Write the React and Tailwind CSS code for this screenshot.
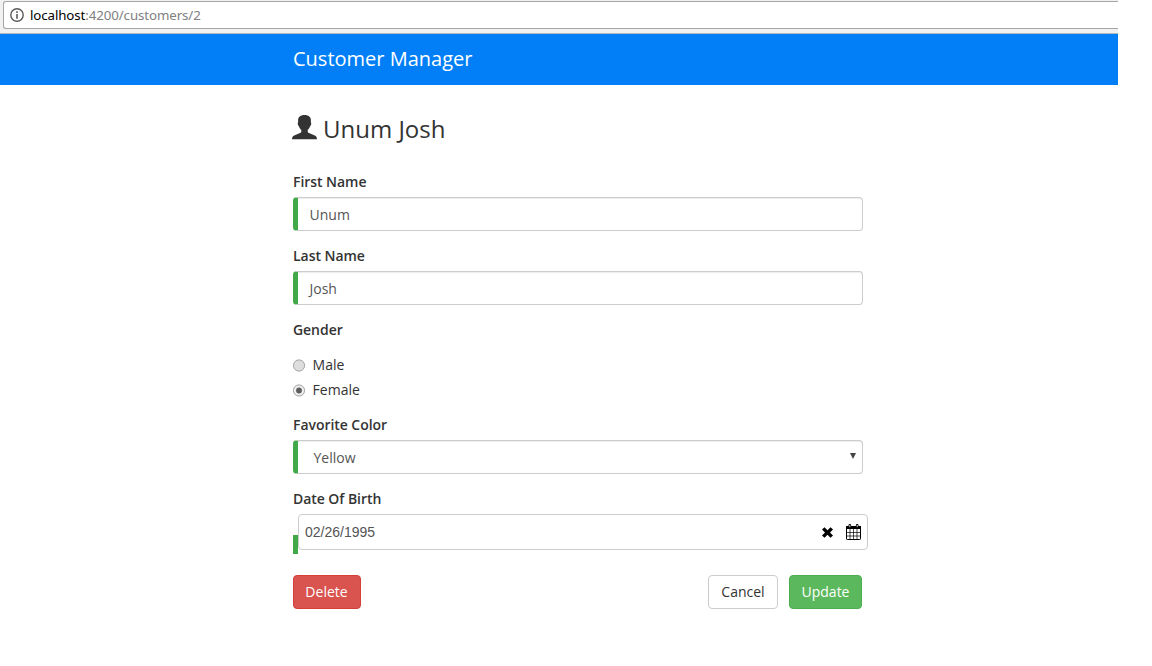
import React from "react";

const label = "h-5 mb-[5px] text-sm leading-5 font-semibold tracking-[-0.05px] text-[#333333] whitespace-nowrap";
const control =
  "flex h-[34px] w-[570px] items-center rounded-[4px] border border-[#cccccc] border-l-[5px] border-l-[#42a948] bg-white pt-px text-sm text-[#555555] shadow-[inset_0_1px_1px_rgba(0,0,0,0.075)]";

function Field({ title, children }) {
  return (
    <div className="mb-[15px]">
      <div className={label}>{title}</div>
      {children}
    </div>
  );
}

function Radio({ name, checked }) {
  return (
    <label className="flex h-5 items-center text-sm leading-5 text-[#333333]">
      <svg width="13" height="13" viewBox="0 0 13 13" className="mr-[7px]">
        <circle cx="6" cy="6.5" r="5.6" fill={checked ? "#eeeeee" : "#dddddd"} stroke="#a2a2a2" />
        {checked && <circle cx="6" cy="6.5" r="2.9" fill="#5c5c5c" />}
      </svg>
      <span className="-ml-[0.4px]">{name}</span>
    </label>
  );
}

function UserIcon() {
  return (
    <svg width="25" height="25" viewBox="0 0 25 25" fill="#333333" className="-ml-px shrink-0">
      <path d="M12.5 0C8.3 0 6.1 2.2 6.1 5.2C6.1 6.4 6.3 7.4 5.9 7.8C5.5 8.4 5.9 10.6 6.9 11.2C7.3 12.8 8.2 14 9.3 14.8V16.5C9.3 17.2 8.8 17.7 8 18.1L2.2 20.6C.8 21.3 .2 22.2 0 24.2H25C24.8 22.2 24.2 21.3 22.8 20.6L17 18.1C16.2 17.7 15.7 17.2 15.7 16.5V14.8C16.8 14 17.7 12.8 18.1 11.2C19.1 10.6 19.5 8.4 19.1 7.8C18.7 7.4 18.9 6.4 18.9 5.2C18.9 2.2 16.7 0 12.5 0Z" />
    </svg>
  );
}

function CalendarIcon() {
  return (
    <svg width="15" height="16" viewBox="0 0 15 16" fill="none" stroke="#000">
      <rect x="0.5" y="2.5" width="14" height="13" rx="0.7" />
      <path d="M0 2h15v3H0z" fill="#000" stroke="none" />
      <path d="M3.8 1.3v2.2M11.2 1.3v2.2" strokeWidth="2.6" strokeLinecap="round" />
      <path d="M3.8 1v2.2M11.2 1v2.2" stroke="#fff" strokeWidth="0.8" />
      <path d="M4 5v10M7.5 5v10M11 5v10M1 8.5h13M1 12h13" strokeWidth="0.7" />
    </svg>
  );
}

export default function App() {
  return (
    <div className="h-[666px] w-[1152px] overflow-hidden bg-white font-['Open_Sans',sans-serif]">
      <div className="flex h-[34px] w-[1118px] flex-col border-b border-[#b1b9bc] bg-[#f2f1f2] pt-px pl-[3px]">
        <div className="flex h-[28px] items-center rounded-l-[3px] border border-r-0 border-[#a6a6a6] bg-white pl-[6px] text-[14px]">
          <svg width="14" height="14" viewBox="0 0 14 14" className="mr-[6px]">
            <circle cx="7" cy="7" r="6.2" fill="none" stroke="#5a5a5a" strokeWidth="1.4" />
            <path d="M6.2 3.2h1.6v1.7H6.2zM6.2 6h1.6v4.8H6.2z" fill="#5a5a5a" />
          </svg>
          <span className="font-['Noto_Sans',sans-serif] text-[13.3px] leading-5 tracking-[-0.1px] text-[#808080]">
            <span className="text-black">localhost</span>:4200/customers/2
          </span>
        </div>
      </div>
      <header className="flex h-[51px] w-[1118px] items-center bg-[#027ff6] pb-[2px] pl-[293px] text-xl text-white">
        Customer Manager
      </header>
      <main className="ml-[293px] w-[570px]">
        <div className="flex h-[87px] pt-[30px]">
          <UserIcon />
          <h1 className="-mt-px ml-[6px] text-2xl leading-[29px] whitespace-nowrap text-[#333333]">Unum Josh</h1>
        </div>
        <Field title="First Name">
          <div className={control + " pl-[11.5px]"}>Unum</div>
        </Field>
        <Field title="Last Name">
          <div className={control + " pl-[11.5px]"}>Josh</div>
        </Field>
        <Field title="Gender">
          <div className="flex flex-col gap-[5px] pt-[10px]">
            <Radio name="Male" />
            <Radio name="Female" checked />
          </div>
        </Field>
        <Field title="Favorite Color">
          <div className={control + " justify-between pl-[15.5px] pr-[6px]"}>
            Yellow
            <svg width="6" height="6" viewBox="0 0 6 6" className="mb-[3px]">
              <path d="M0 0h6L3 6z" fill="#444" />
            </svg>
          </div>
        </Field>
        <div>
          <div className={label}>Date Of Birth</div>
          <div className="flex h-[40px] w-[575px]">
            <div className="mt-[21px] h-[19px] w-[5px] bg-[#42a948]" />
            <div className="flex h-[36px] w-[570px] items-center rounded-[4px] border border-[#cccccc] pr-[6px] pl-[6px] font-['Liberation_Sans',sans-serif] text-sm text-[#555555]">
              <span className="grow">02/26/1995</span>
              <svg width="11" height="11" viewBox="0 0 11 11" className="mt-px mr-[13px]">
                <path d="M2.5 0.3L5.5 3.2L8.5 0.3L11 2.6L8 5.5L11 8.4L8.5 10.7L5.5 7.8L2.5 10.7L0 8.4L3 5.5L0 2.6Z" fill="#000" />
              </svg>
              <CalendarIcon />
            </div>
          </div>
        </div>
        <div className="mt-[21px] flex h-[34px] text-sm leading-5">
          <button className="w-[68px] rounded-[4px] border border-[#d43f3a] bg-[#d9534f] pr-px text-white">Delete</button>
          <button className="ml-auto w-[70px] rounded-[4px] border border-[#cccccc] bg-white text-[#333333]">Cancel</button>
          <button className="mr-px ml-[11px] w-[73px] rounded-[4px] border border-[#4cae4c] bg-[#5cb85c] text-white">Update</button>
        </div>
      </main>
    </div>
  );
}
